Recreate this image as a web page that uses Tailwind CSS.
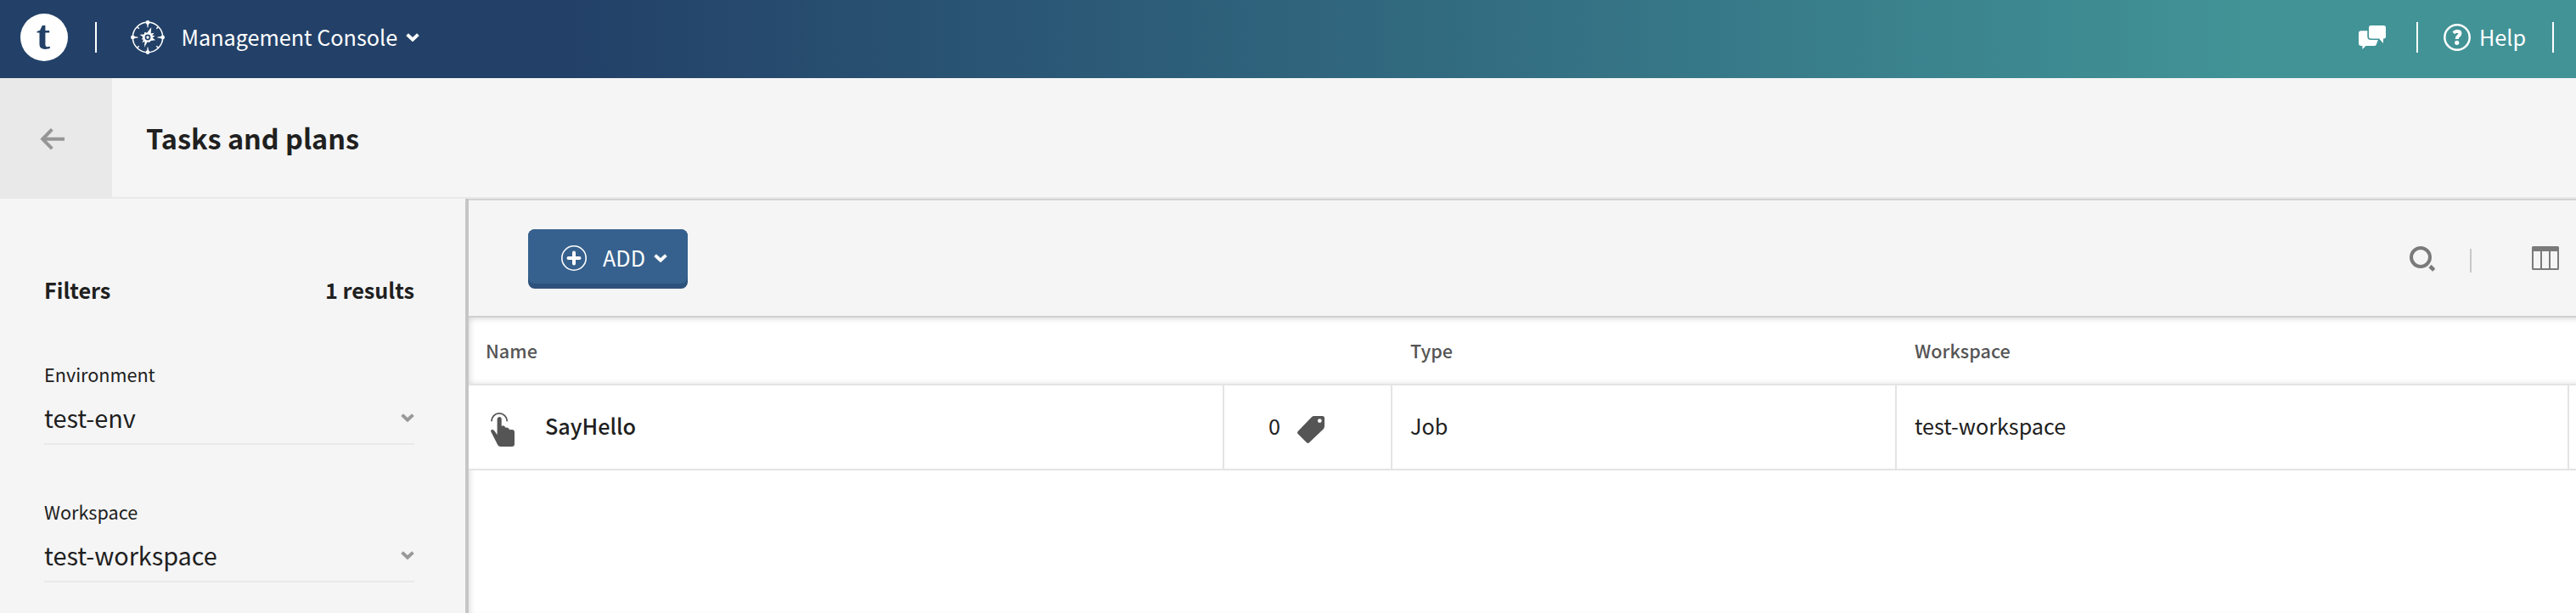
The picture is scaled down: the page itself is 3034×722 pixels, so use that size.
<!DOCTYPE html>
<html lang="en">
<head>
<meta charset="utf-8">
<title>Tasks and plans</title>
<script src="https://cdn.jsdelivr.net/npm/@tailwindcss/browser@4"></script>
</head>
<body class="flex h-[722px] w-[3034px] flex-col overflow-hidden bg-[#f5f5f5] font-['Noto_Sans_CJK_SC',sans-serif] text-[25.2px] leading-8 text-[#202020]">

<svg class="hidden">
  <symbol id="chevron" viewBox="0 0 16 10"><path d="M1.6 1.6 8 7.6l6.400-6" fill="none" stroke="currentColor" stroke-width="4"/></symbol>
</svg>

<header class="flex h-[92px] shrink-0 items-center bg-linear-to-r from-[#234168] from-[676px] to-[#419396] to-[2640px] pb-1 pl-6 pr-[26px] text-white">
  <div class="flex size-14 items-center justify-center rounded-full bg-white">
    <span class="pb-[5px] pr-0.5 font-['Liberation_Serif',serif] text-[49px] font-bold leading-[50px] text-[#234168]">t</span>
  </div>
  <div class="ml-8 h-9 w-0.5 bg-white"></div>
  <svg class="ml-10 size-10" viewBox="0 0 40 40" fill="none" stroke="currentColor">
    <circle cx="20" cy="20" r="17.700" stroke-width="1.500"/>
    <g fill="currentColor" stroke="none">
      <circle cx="20" cy="2.400" r="2.400"/><circle cx="20" cy="37.600" r="2.400"/><circle cx="2.400" cy="20" r="2.400"/><circle cx="37.600" cy="20" r="2.400"/>
      <path d="M18.800 2h2.400L20.400 8.500h-.8zM18.800 38h2.400L20.400 31.500h-.8zM2 18.800v2.400L8.500 20.400v-.8zM38 18.800v2.400L31.500 20.400v-.8z"/>
      <path fill-rule="evenodd" d="M24.200 8.200 23.700 15.600 27.600 14.700 25.200 17.800 28.600 18.200 25.500 20.500 29 23.300 23.600 23.900 22.300 25.800 19.500 25.600 16 31.800 16.500 24.800 13.500 26.200 15 22.500 12.800 22.400 14.400 19.800 10.700 16.700 15.700 16.400 16.400 13.800 19 14.800zM20 16.600a3.400 3.400 0 1 0 0 6.800 3.400 3.400 0 0 0 0-6.800z"/>
      <circle cx="20" cy="20" r="1.700"/>
    </g>
    <path d="M7.700 7.700l2 2M32.300 7.700l-2 2M7.700 32.300l2-2M32.300 32.300l-2-2" stroke-width="1.500"/>
  </svg>
  <span class="ml-[19.500px] pb-[3px]">Management Console</span>
  <svg class="ml-[10px] h-[10px] w-4"><use href="#chevron"/></svg>

  <div class="ml-auto flex items-center">
    <svg class="h-7 w-8" viewBox="0 0 32 28" fill="currentColor">
      <path d="M14 0h15.500Q32 0 32 2.500V13q0 2.500-2.500 2.500H29V21l-5-5.500H14.500Q12 15.500 12 13V2.500Q12 0 14 0z"/>
      <path d="M10.300 6.200V13q0 4 4 4H22.800L20.800 22.500q-.6 1.500-2.200 1.500H8.500L4.400 28V24H3Q0 24 0 21V9.500Q0 6.200 3 6.200z"/>
    </svg>
    <div class="ml-9 h-9 w-0.5 bg-white"></div>
    <svg class="ml-[30px] size-8" viewBox="0 0 32 32" fill="none" stroke="currentColor">
      <circle cx="16" cy="16" r="14.700" stroke-width="2.500"/>
      <path d="M11.800 10.800q1.900-2 4.400-2 3.200.2 3.200 2.700 0 1.600-1.600 2.700Q15.800 15.700 15.700 18" stroke-width="4"/>
      <circle cx="15.700" cy="22.300" r="2.600" fill="currentColor" stroke="none"/>
    </svg>
    <span class="ml-[10px] w-[86px] pb-[3px]">Help</span>
    <div class="h-9 w-0.5 bg-white"></div>
  </div>
</header>

<div class="flex h-[142px] shrink-0 border-b-2 border-[#e9e9e9]">
  <div class="-mb-0.5 flex w-[132px] items-center bg-[#e9e9e9] pl-[47px] pt-0.5 text-[#969696]">
    <svg class="h-[26px] w-[30px]" viewBox="0 0 30 26" fill="none" stroke="currentColor" stroke-width="4"><path d="M14.300 1.400 3.200 12.800l11.100 11.400M3.500 12.800H29"/></svg>
  </div>
  <h1 class="flex items-center pl-10 text-[32.4px] font-bold">Tasks and plans</h1>
</div>

<div class="flex min-h-0 flex-1">
  <aside class="w-[552px] shrink-0 border-r-4 border-[#c6c6c6] pl-[52px] pr-[60px] pt-[91px]">
    <div class="flex justify-between font-bold"><span>Filters</span><span>1 results</span></div>
    <div class="mt-[68px]">
      <div class="text-[21.6px]">Environment</div>
      <div class="mt-[15px] flex h-[52px] items-start justify-between border-b-2 border-[#e9e9e9] pt-1 text-[28.8px]">
        <span>test-env</span>
        <svg class="mt-[11px] h-[10px] w-4 text-[#999]"><use href="#chevron"/></svg>
      </div>
    </div>
    <div class="mt-[63px]">
      <div class="text-[21.6px]">Workspace</div>
      <div class="mt-[15px] flex h-[52px] items-start justify-between border-b-2 border-[#e9e9e9] pt-1 text-[28.8px]">
        <span>test-workspace</span>
        <svg class="mt-[11px] h-[10px] w-4 text-[#999]"><use href="#chevron"/></svg>
      </div>
    </div>
  </aside>

  <main class="flex min-w-0 flex-1 flex-col bg-white">
    <div class="flex h-[138px] shrink-0 items-start border-t-2 border-[#d3d3d3] bg-[#f5f5f5] pl-[70px] pr-5 pt-[34px]">
      <button class="flex h-[70px] w-[188px] rounded-lg bg-[#2c527b]">
        <span class="flex h-16 w-full items-center rounded-lg bg-[#36618e] pl-[39px] text-white">
          <svg class="mt-1 size-[30px]" viewBox="0 0 30 30" fill="none" stroke="currentColor">
            <circle cx="15" cy="15" r="14.200" stroke-width="1.600"/>
            <path d="M15 8.500v13M8.500 15h13" stroke-width="4" stroke-linecap="round" stroke-linejoin="round"/>
          </svg>
          <span class="ml-[19px] w-[60px] pt-0.5 text-left">ADD</span>
          <svg class="mt-1 h-[10px] w-4"><use href="#chevron"/></svg>
        </span>
      </button>
      <div class="ml-auto flex items-start pt-5 text-[#7a7a7a]">
        <svg class="size-[30px]" viewBox="0 0 30 30" fill="none" stroke="currentColor" stroke-width="4"><circle cx="13" cy="13" r="11"/><path d="M24 23.500l4.700 4.700" stroke-width="4.600"/></svg>
        <div class="ml-[41px] mt-[3px] h-7 w-0.5 bg-[#c8c8c8]"></div>
        <svg class="ml-[71px] h-7 w-8" viewBox="0 0 32 28" fill="currentColor" fill-rule="evenodd"><path d="M1.500 0h29Q32 0 32 1.500v25Q32 28 30.500 28h-29Q0 28 0 26.500v-25Q0 0 1.500 0zM2 6v20h8V6zM12 6v20h8V6zM22 6v20h8V6z"/></svg>
      </div>
    </div>

    <div class="-mr-3 flex h-[82px] shrink-0 items-center border-b-2 border-[#e4e4e4] pt-0.5 text-[21.6px] font-medium text-[#555] shadow-[inset_0_2px_0_#d0d0d0,inset_0_2px_8px_rgba(0,0,0,0.200)]">
      <div class="w-[1088px] pl-5">Name</div>
      <div class="w-[594px] pl-[21px]">Type</div>
      <div class="pl-[21px]">Workspace</div>
    </div>

    <div class="flex h-[100px] shrink-0 items-stretch border-b-2 border-[#e4e4e4]">
      <div class="flex w-[890px] items-center border-r-2 border-[#e4e4e4] pb-1 pl-[26px] font-medium">
        <svg class="mt-[10px] h-10 w-7 text-[#555]" viewBox="0 0 28 40" fill="none">
          <path d="M.900 10.200C.900 5 4.900.900 10 .900s9.300 4.100 9.300 9.300" stroke="currentColor" stroke-width="1.800"/>
          <path fill="currentColor" d="M7.600 7.600Q7.800 5 10.200 5t2.500 2.600V16q2-2.200 5 1.700 3-.900 4.700 2.600Q28 19 28 23V37q0 3-3 3H11.500q-2.200 0-3.300-2L.300 22.500Q-.400 20 2 20q1.300 0 2.300 1.500L7.600 26z"/>
        </svg>
        <span class="ml-[36px]">SayHello</span>
      </div>
      <div class="flex w-[198px] items-center border-r-2 border-[#e4e4e4] pb-1 pl-[52px]">
        <span class="w-[34px]">0</span>
        <svg class="mt-[10px] size-8 text-[#555]" viewBox="0 0 32 32" fill="currentColor" fill-rule="evenodd"><path d="M20 0h9.500Q32 0 32 2.500V12q0 2-1.400 3.400L14.300 31.100q-1.800 1.700-3.600 0L.900 21.300q-1.700-1.800 0-3.600L16.600 1.400Q18 0 20 0zM26.300 3.200a2.400 2.400 0 1 0 0 4.800 2.400 2.400 0 0 0 0-4.800z"/></svg>
      </div>
      <div class="flex w-[594px] items-center border-r-2 border-[#e4e4e4] pb-1 pl-[21px]">Job</div>
      <div class="flex w-[792px] items-center border-r-2 border-[#e4e4e4] pb-1 pl-[21px]">test-workspace</div>
    </div>
    <div class="flex-1 shadow-[inset_6px_0_6px_-4px_rgba(0,0,0,0.120)]"></div>
  </main>
</div>
</body>
</html>
